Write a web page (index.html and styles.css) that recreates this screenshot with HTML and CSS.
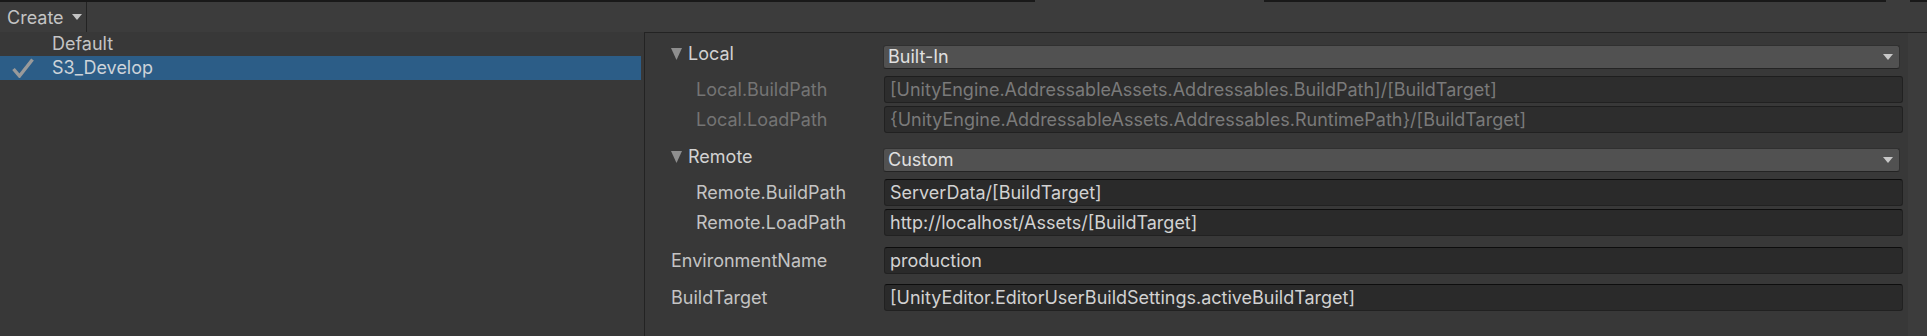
FILE: index.html
```html
<!DOCTYPE html>
<html lang="en">
<head>
    <meta charset="UTF-8">
    <title>Addressables Profiles</title>
    <link rel="stylesheet" href="styles.css">
</head>
<body>
    <div class="topline">
        <div class="tab-gap gap-a"></div>
        <div class="tab-gap gap-b"></div>
    </div>
    <div class="toolbar">
        <div class="create">
            <span>Create</span>
            <svg class="caret" width="10" height="6" viewBox="0 0 10 6"><path d="M0 0 H10 L5 6 Z"/></svg>
        </div>
    </div>
    <div class="main">
        <div class="list">
            <div class="list-item">Default</div>
            <div class="list-item selected">
                <svg class="check" width="22" height="20" viewBox="0 0 22 20"><path d="M1.5 11 L7.5 18 L20.5 1.5" fill="none" stroke="#9a9a9a" stroke-width="3.4" stroke-linejoin="miter"/></svg>
                <span>S3_Develop</span>
            </div>
        </div>
        <div class="panel">
            <div class="inspector">
                <!-- Local -->
                <div class="row">
                    <div class="label foldout">
                        <svg class="arrow" width="11" height="12" viewBox="0 0 11 12"><path d="M0 0 H11 L5.5 12 Z"/></svg>
                        <span>Local</span>
                    </div>
                    <div class="dropdown">
                        <span>Built-In</span>
                        <svg class="drop-arrow" width="10" height="6" viewBox="0 0 10 6"><path d="M0 0 H10 L5 6 Z"/></svg>
                    </div>
                </div>
                <div class="row child-first">
                    <div class="label sub disabled">Local.BuildPath</div>
                    <div class="field disabled">[UnityEngine.AddressableAssets.Addressables.BuildPath]/[BuildTarget]</div>
                </div>
                <div class="row child">
                    <div class="label sub disabled">Local.LoadPath</div>
                    <div class="field disabled">{UnityEngine.AddressableAssets.Addressables.RuntimePath}/[BuildTarget]</div>
                </div>

                <!-- Remote -->
                <div class="row group">
                    <div class="label foldout">
                        <svg class="arrow" width="11" height="12" viewBox="0 0 11 12"><path d="M0 0 H11 L5.5 12 Z"/></svg>
                        <span>Remote</span>
                    </div>
                    <div class="dropdown">
                        <span>Custom</span>
                        <svg class="drop-arrow" width="10" height="6" viewBox="0 0 10 6"><path d="M0 0 H10 L5 6 Z"/></svg>
                    </div>
                </div>
                <div class="row child-first">
                    <div class="label sub">Remote.BuildPath</div>
                    <div class="field">ServerData/[BuildTarget]</div>
                </div>
                <div class="row child">
                    <div class="label sub">Remote.LoadPath</div>
                    <div class="field">http://localhost/Assets/[BuildTarget]</div>
                </div>

                <div class="row prop">
                    <div class="label">EnvironmentName</div>
                    <div class="field">production</div>
                </div>
                <div class="row prop last">
                    <div class="label">BuildTarget</div>
                    <div class="field">[UnityEditor.EditorUserBuildSettings.activeBuildTarget]</div>
                </div>
            </div>
            <div class="gutter"></div>
        </div>
    </div>
</body>
</html>
```

FILE: styles.css
```css
body {
    margin: 0;
    width: 1927px;
    height: 336px;
    overflow: hidden;
    background: #383838;
    font-family: Inter, "Noto Sans", sans-serif;
    font-size: 18px;
    color: #c4c4c4;
}
.topline {
    display: flex;
    height: 2px;
    background: #191919;
}
.tab-gap {
    background: #3c3c3c;
}
.gap-a {
    margin-left: 1035px;
    width: 229px;
}
.gap-b {
    margin-left: 622px;
    width: 24px;
}
.toolbar {
    display: flex;
    height: 30px;
    background: #3c3c3c;
}
.create {
    width: 87px;
    box-sizing: border-box;
    display: flex;
    align-items: center;
    gap: 8px;
    padding-left: 7px;
    border-right: 1px solid #232323;
}
.caret {
    fill: #c4c4c4;
}
.main {
    display: flex;
    height: 304px;
}
.list {
    width: 641px;
    margin-right: 3px;
}
.list-item {
    height: 24px;
    line-height: 24px;
    display: flex;
    align-items: center;
    padding-left: 52px;
}
.list-item.selected {
    background: #2c5d87;
    padding-left: 12px;
    color: #cdd3d9;
}
.check {
    margin-right: 18px;
}
.panel {
    flex: 1;
    display: flex;
    border-left: 1px solid #232323;
    border-top: 1px solid #232323;
}
.inspector {
    flex: 1;
    padding: 12px 5px 0 26px;
}
.gutter {
    width: 19px;
    background: #3c3c3c;
}
.row {
    display: flex;
    align-items: center;
}
.row.child-first {
    margin-top: 7px;
}
.row.child {
    margin-top: 3px;
}
.row.group {
    margin-top: 15px;
}
.row.prop {
    margin-top: 11px;
}
.row.prop.last {
    margin-top: 10px;
}
.label {
    width: 212px;
    flex: none;
    box-sizing: border-box;
    line-height: 22px;
    white-space: nowrap;
}
.label.sub {
    padding-left: 25px;
}
.label.disabled {
    color: #747474;
}
.foldout {
    align-self: flex-start;
    margin-top: -2px;
    display: flex;
    align-items: center;
    gap: 6px;
    color: #d2d2d2;
}
.arrow {
    fill: #8e8e8e;
}
.dropdown {
    flex: 1;
    height: 24px;
    margin-right: 3px;
    box-sizing: border-box;
    display: flex;
    align-items: center;
    justify-content: space-between;
    padding: 0 6px 0 4px;
    background: #515151;
    border: 1px solid #303030;
    border-bottom-color: #242424;
    border-radius: 3px;
    color: #e0e0e0;
    line-height: 22px;
}
.drop-arrow {
    fill: #c8c8c8;
}
.field {
    flex: 1;
    margin-left: 1px;
    height: 27px;
    box-sizing: border-box;
    padding: 0 6px 0 5px;
    background: #2a2a2a;
    border: 1px solid #212121;
    border-top-color: #0d0d0d;
    border-radius: 3px;
    line-height: 25px;
    color: #d2d2d2;
    white-space: nowrap;
    overflow: hidden;
}
.field.disabled {
    background: #2d2d2d;
    border-top-color: #1e1e1e;
    color: #7a7a7a;
}
```
